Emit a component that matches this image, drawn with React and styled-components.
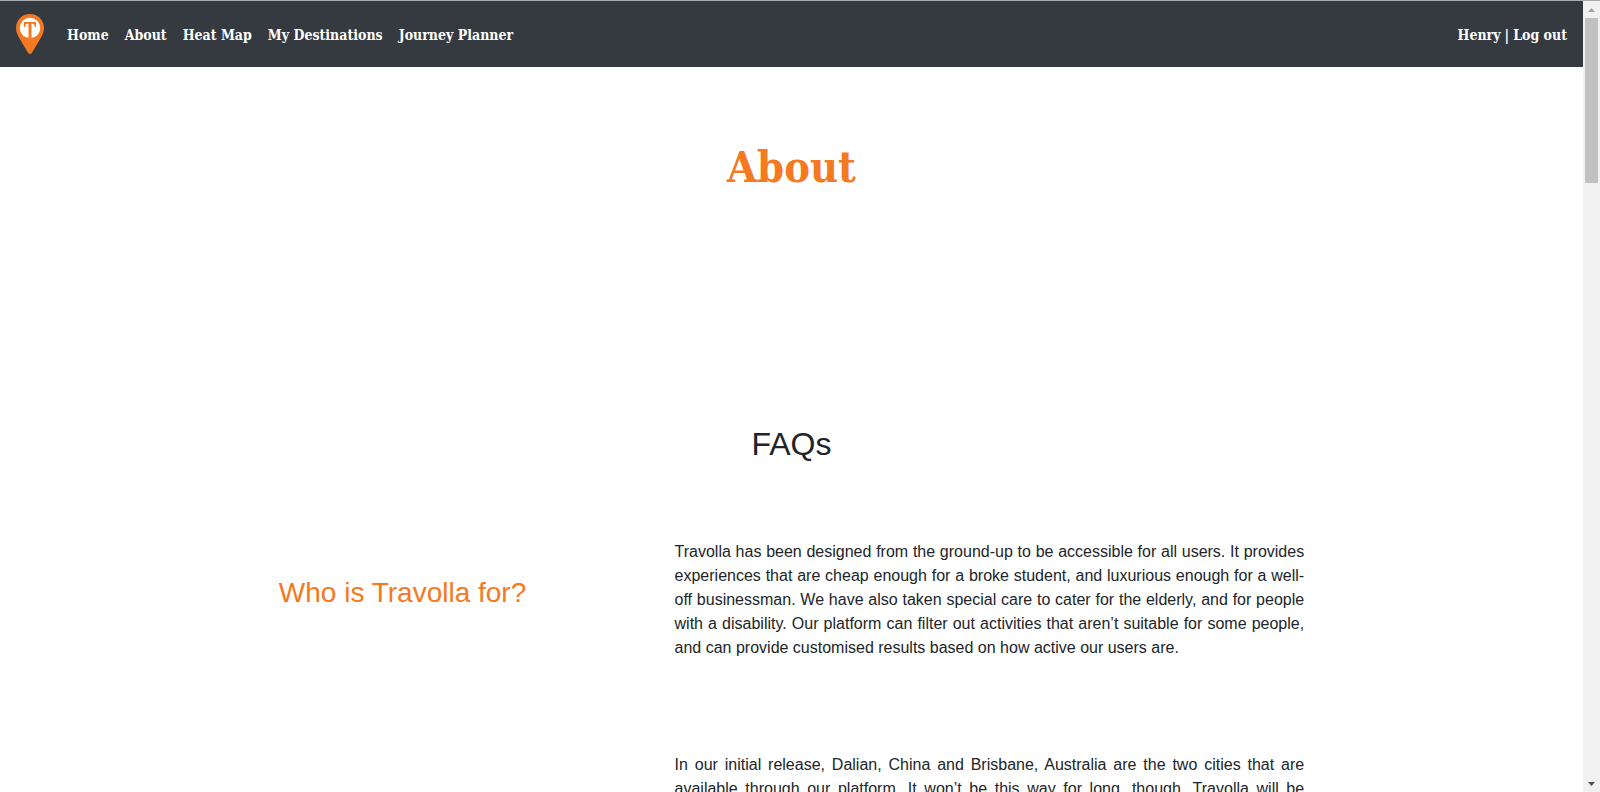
import React from "react";
import styled, { createGlobalStyle } from "styled-components";

const slab = `"DejaVu Serif Condensed", "DejaVu Serif", serif`;
const orange = "#f47920";

const GlobalStyle = createGlobalStyle`
  *, *::before, *::after { box-sizing: border-box; }
  body {
    margin: 0;
    background: #fff;
    color: #212529;
    font: 400 16px/24px "Liberation Sans", Arial, sans-serif;
  }
`;

const Viewport = styled.div`
  display: flex;
  height: 100vh;
  overflow: hidden;
  border-top: 1px solid #a9abad;
`;

const Page = styled.div`
  flex: 1;
  min-width: 0;
  overflow: hidden;
`;

const Navbar = styled.nav`
  display: flex;
  align-items: center;
  height: 66px;
  padding: 0 16px;
  background: #343a40;
`;

const Brand = styled.a`
  display: flex;
  margin-right: 23px;
`;

const NavList = styled.ul`
  display: flex;
  flex: 1;
  gap: 16px;
  margin: 0;
  padding: 2px 0 0;
  list-style: none;
`;

const NavLink = styled.a`
  color: #fff;
  font: 700 14px/24px ${slab};
  text-decoration: none;
  white-space: nowrap;
`;

const Account = styled.div`
  display: flex;
  gap: 4px;
  padding-top: 2px;
  color: #fff;
  font: 700 14px/24px ${slab};
`;

const Title = styled.h1`
  margin: 0;
  padding: 71px 0 229px;
  color: ${orange};
  font: 700 43px/58px ${slab};
  text-align: center;
`;

const SectionTitle = styled.h2`
  margin: 0 0 77px;
  font-size: 32px;
  line-height: 38px;
  font-weight: 400;
  text-align: center;
`;

const FaqList = styled.section`
  width: 66.667%;
  margin: 0 auto;
`;

const FaqRow = styled.article`
  display: grid;
  grid-template-columns: 3fr 5fr;
  align-items: center;
  padding-bottom: 77px;
`;

const Question = styled.h3`
  margin: 0 0 30px;
  padding: 0 15px;
  color: ${orange};
  font-size: 28px;
  line-height: 34px;
  font-weight: 400;
`;

const Answer = styled.p`
  grid-column: 2;
  margin: 0 0 16px;
  padding: 0 15px;
  text-align: justify;
  text-align-last: ${(p) => (p.$continues ? "justify" : "auto")};
`;

const ScrollTrack = styled.div`
  display: flex;
  flex-direction: column;
  width: 17px;
  padding: 0 2px;
  background: #f1f1f1;
`;

const ScrollArrow = styled.svg`
  display: block;
  width: 13px;
  height: 17px;
  fill: ${(p) => p.$color};
`;

const ScrollThumb = styled.div`
  height: 165px;
  margin-bottom: auto;
  background: #c1c1c1;
`;

const links = ["Home", "About", "Heat Map", "My Destinations", "Journey Planner"];

const faqs = [
  {
    question: "Who is Travolla for?",
    answer:
      "Travolla has been designed from the ground-up to be accessible for all users. It provides experiences that are cheap enough for a broke student, and luxurious enough for a well-off businessman. We have also taken special care to cater for the elderly, and for people with a disability. Our platform can filter out activities that aren’t suitable for some people, and can provide customised results based on how active our users are.",
  },
  {
    continues: true,
    answer:
      "In our initial release, Dalian, China and Brisbane, Australia are the two cities that are available through our platform. It won’t be this way for long, though. Travolla will be",
  },
];

function Logo() {
  return (
    <svg width="28" height="40" viewBox="0 0 28 40" role="img" aria-label="Travolla">
      <path d="M14 0C6.2 0 0 6.2 0 14c0 4.200 1.800 7.700 4 11.300l8.200 13.700c.8 1.300 2.800 1.300 3.600 0l8.200-13.700c2.200-3.600 4-7.100 4-11.300C28 6.200 21.800 0 14 0Z" fill={orange} />
      <circle cx="14" cy="14" r="10.200" fill="#fff" />
      <path d="M8 8h12v5h-1.200c-.1-2.200-.7-3.300-2-3.300h-1.300V24h-3V9.700h-1.300c-1.300 0-1.900 1.100-2 3.300H8Z" fill={orange} />
    </svg>
  );
}

export default function App() {
  return (
    <>
      <GlobalStyle />
      <Viewport>
        <Page>
          <Navbar>
            <Brand href="#"><Logo /></Brand>
            <NavList>
              {links.map((l) => (
                <li key={l}><NavLink href="#">{l}</NavLink></li>
              ))}
            </NavList>
            <Account>
              <NavLink href="#">Henry</NavLink>
              <span>|</span>
              <NavLink href="#">Log out</NavLink>
            </Account>
          </Navbar>
          <main>
            <Title>About</Title>
            <SectionTitle>FAQs</SectionTitle>
            <FaqList>
              {faqs.map((f) => (
                <FaqRow key={f.answer}>
                  {f.question && <Question>{f.question}</Question>}
                  <Answer $continues={f.continues}>{f.answer}</Answer>
                </FaqRow>
              ))}
            </FaqList>
          </main>
        </Page>
        <ScrollTrack aria-hidden="true">
          <ScrollArrow $color="#a3a3a3" viewBox="0 0 13 17"><path d="M3 11h7L6.500 7Z" /></ScrollArrow>
          <ScrollThumb />
          <ScrollArrow $color="#505050" viewBox="0 0 13 17"><path d="M3 7h7L6.500 11Z" /></ScrollArrow>
        </ScrollTrack>
      </Viewport>
    </>
  );
}
